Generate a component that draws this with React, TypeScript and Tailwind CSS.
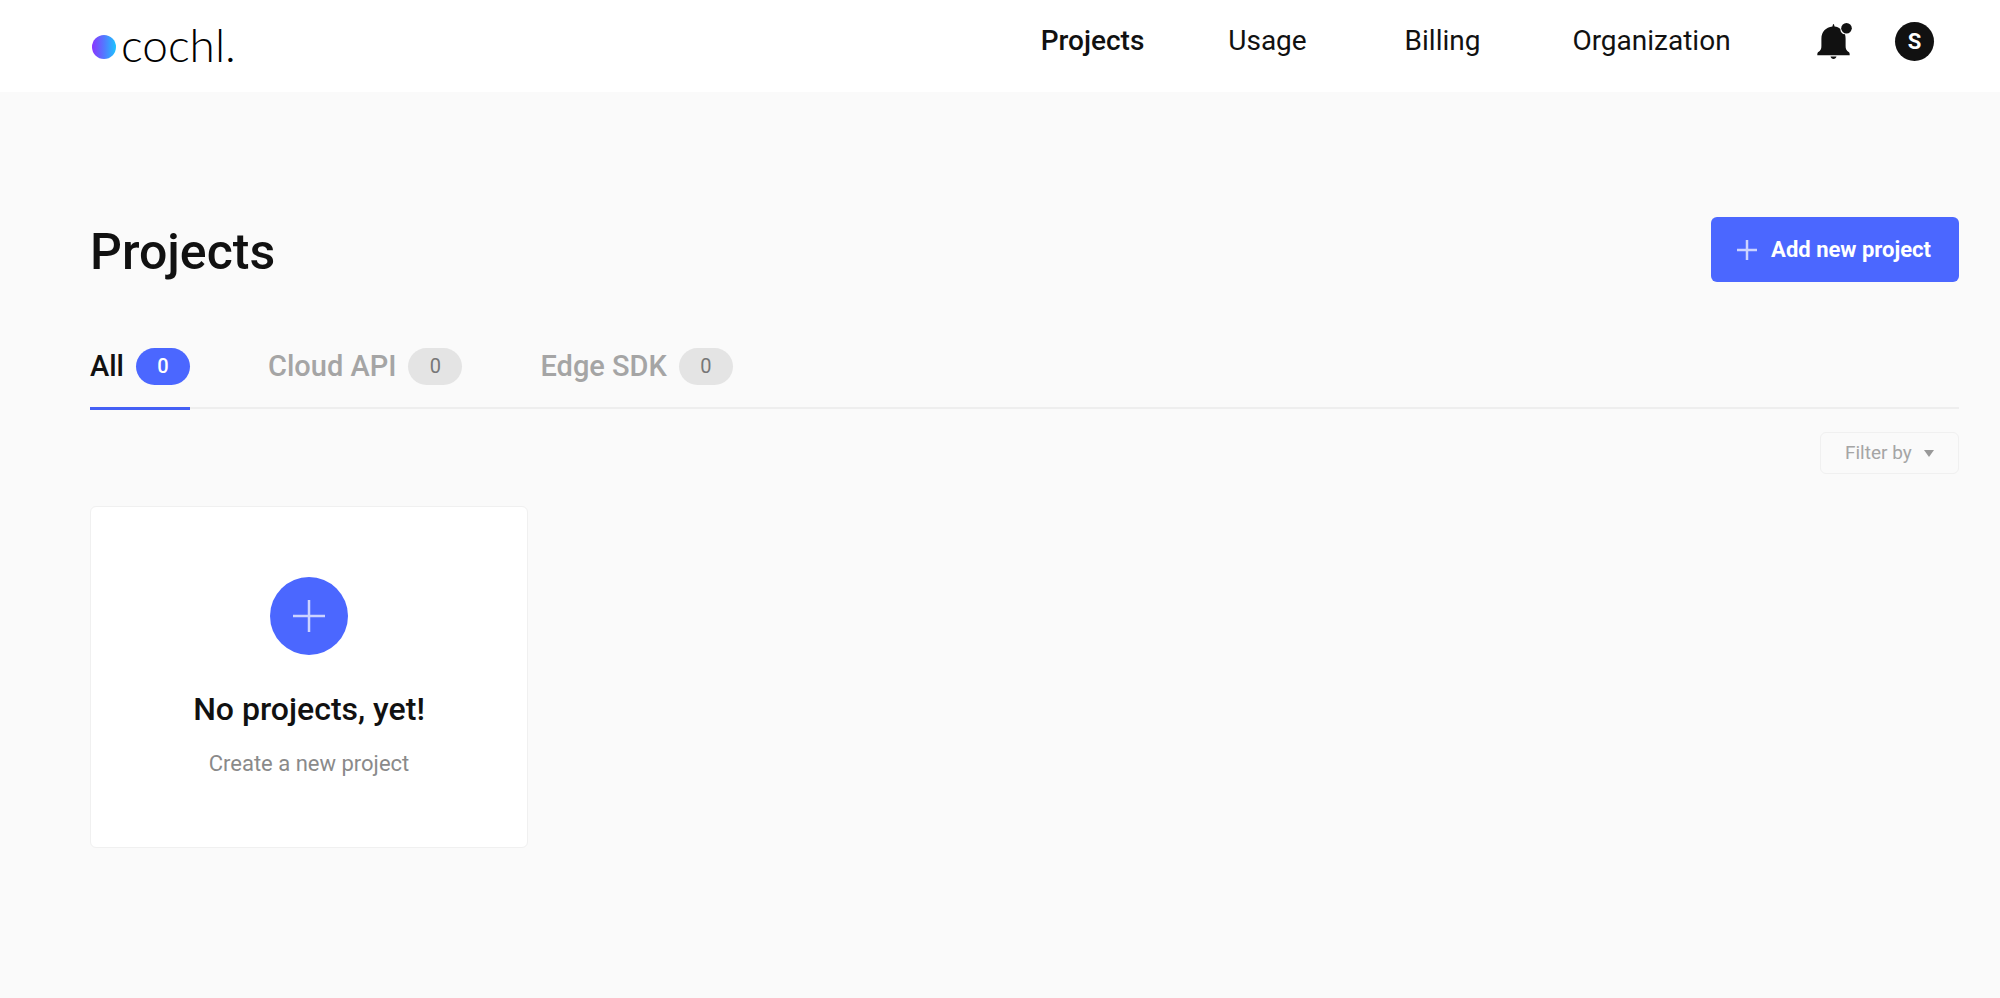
const navItems = ['Projects', 'Usage', 'Billing'];

const tabs = [
    { name: 'All', count: 0, active: true },
    { name: 'Cloud API', count: 0, active: false },
    { name: 'Edge SDK', count: 0, active: false },
];

function Logo() {
    return (
        <a href="#" aria-label="cochl." className="flex items-center gap-1 text-black">
            <svg width="26" height="26" viewBox="0 0 26 26" className="mt-1">
                <defs>
                    <linearGradient id="dot" x1="0" x2="1" y1="0" y2="0">
                        <stop offset="0" stopColor="#8a35ff" />
                        <stop offset="0.5" stopColor="#5478ff" />
                        <stop offset="1" stopColor="#1cc4ff" />
                    </linearGradient>
                </defs>
                <circle cx="13" cy="13" r="12" fill="url(#dot)" />
            </svg>
            <span className="font-['Lato',sans-serif] text-[46px] leading-[48px] font-light">cochl.</span>
        </a>
    );
}

function Plus({ size }: { size: number }) {
    return (
        <svg width={size} height={size} viewBox={`0 0 ${size} ${size}`} stroke="#ccd3ff" strokeWidth="2.5">
            <path d={`M${size / 2} 0V${size}M0 ${size / 2}H${size}`} />
        </svg>
    );
}

function BellIcon() {
    return (
        <svg width="36" height="38" viewBox="0 0 36 38" fill="#111">
            <path d="M16.500 2c.5 0 .8 1.300 1.100 2.600 2.300.3 4.200 1.100 5.700 2.300.1 3.200 1.900 5.100 4.700 5.400.4 1.400.6 2.800.6 4.400v7.300c0 3 .6 4.500 3.400 6.300.5.400.7 1.200.7 2.900H.3c0-1.700.2-2.500.7-2.900 2.800-1.800 3.400-3.300 3.400-6.300v-7.300c0-6.700 4.400-11.300 11-12.100.3-1.300.6-2.600 1.100-2.600Z" />
            <path d="M13.500 34.500h6c-.5 1.600-1.400 2.500-3 2.500s-2.500-.9-3-2.500Z" />
            <circle cx="29.500" cy="6.200" r="5.300" />
        </svg>
    );
}

function App() {
    return (
        <div className="min-h-screen bg-[#fafafa] font-['Roboto',sans-serif] text-[#111]">
            {/* Header */}
            <header className="flex h-[92px] items-start justify-between bg-white pr-[66px] pl-[91px]">
                <div className="pt-[21px]">
                    <Logo />
                </div>
                <div className="flex h-[82px] items-center">
                    <nav className="flex text-center text-[28px] leading-9">
                        {navItems.map((item) => (
                            <a key={item} href="#" className="w-[175px] first:font-medium">{item}</a>
                        ))}
                        <a href="#" className="w-[243px]">Organization</a>
                    </nav>
                    <button aria-label="Notifications" className="ml-11">
                        <BellIcon />
                    </button>
                    <button className="ml-[42px] size-[39px] rounded-full bg-[#111] text-[22px] font-bold text-white">S</button>
                </div>
            </header>

            {/* Main Content */}
            <main className="pt-[125px] pr-[41px] pl-[90px]">
                <div className="flex items-center justify-between">
                    <h1 className="pt-[5px] text-[50px] leading-[60px] font-medium">Projects</h1>
                    <button className="flex h-[65px] items-center gap-3 rounded-md bg-[#4b67ff] px-[26px] text-[22px] font-bold text-white">
                        <Plus size={20} />
                        <span className="px-0.5">Add new project</span>
                    </button>
                </div>

                <div role="tablist" className="mt-[58px] flex gap-[78px] border-b-2 border-[#eee] text-[29px] leading-9 font-medium">
                    {tabs.map((tab) => (
                        <button
                            key={tab.name}
                            role="tab"
                            aria-selected={tab.active}
                            className={
                                tab.active
                                    ? '-mb-[3px] flex h-[70px] items-start gap-3 border-b-3 border-[#4560f5] pt-2'
                                    : 'flex items-start gap-3 pt-2 text-[#a5a5a5]'
                            }
                        >
                            {tab.name}
                            <span
                                className={
                                    tab.active
                                        ? 'h-[37px] w-[54px] rounded-full bg-[#4b67ff] text-xl leading-[37px] text-white'
                                        : 'h-[37px] w-[54px] rounded-full bg-[#e4e4e4] text-xl leading-[37px] font-normal text-[#777]'
                                }
                            >
                                {tab.count}
                            </span>
                        </button>
                    ))}
                </div>

                <div className="mt-[23px] flex justify-end">
                    <label className="flex h-[42px] items-center gap-3 rounded-md border border-[#f0f0f0] px-6 text-[#a5a5a5]">
                        <select aria-label="Filter by" className="appearance-none bg-transparent text-[19px]">
                            <option>Filter by</option>
                        </select>
                        <svg width="10" height="7" viewBox="0 0 10 7" fill="#999">
                            <path d="M0 0h10L5 7Z" />
                        </svg>
                    </label>
                </div>

                <button className="mt-8 flex h-[342px] w-[438px] flex-col items-center rounded-md border border-[#f0f0f0] bg-white pt-[70px]">
                    <span className="flex size-[78px] items-center justify-center rounded-full bg-[#4b67ff]">
                        <Plus size={32} />
                    </span>
                    <span className="mt-[34px] text-[32px] leading-10 font-medium">No projects, yet!</span>
                    <span className="mt-[19px] text-[22px] leading-8 text-[#8a8a8a]">Create a new project</span>
                </button>
            </main>
        </div>
    );
}

export default App;
